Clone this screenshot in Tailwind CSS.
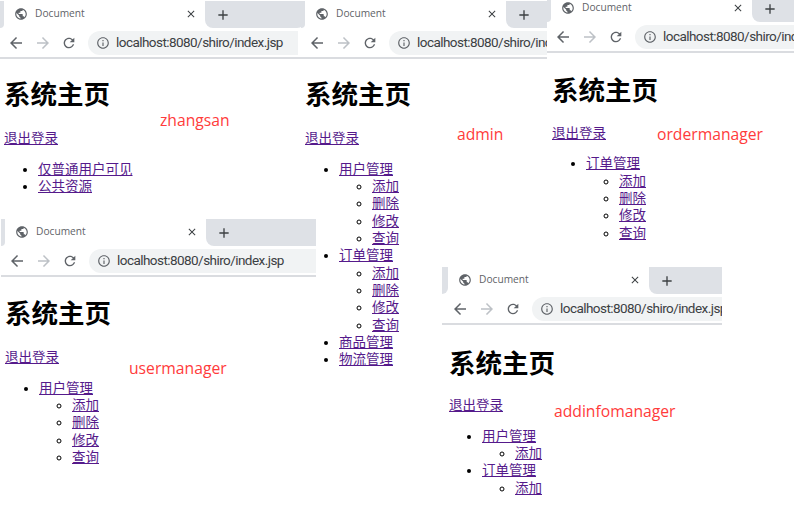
<!DOCTYPE html>
<html lang="zh-CN">

<head>
    <meta charset="UTF-8">
    <meta name="viewport" content="width=device-width, initial-scale=1.0">
    <title>Document</title>
    <script src="https://cdn.jsdelivr.net/npm/@tailwindcss/browser@4"></script>
</head>

<body class="bg-white">
    <svg class="hidden">
        <symbol id="globe" viewBox="0 0 24 24"><path d="M12 2C6.48 2 2 6.48 2 12s4.48 10 10 10 10-4.48 10-10S17.52 2 12 2zm-1 17.93c-3.95-.49-7-3.85-7-7.93 0-.62.08-1.21.21-1.79L9 15v1c0 1.1.9 2 2 2v1.93zm6.9-2.54c-.26-.81-1-1.39-1.9-1.39h-1v-3c0-.55-.45-1-1-1H8v-2h2c.55 0 1-.45 1-1V7h2c1.1 0 2-.9 2-2v-.41c2.93 1.19 5 4.06 5 7.41 0 2.08-.8 3.97-2.1 5.39z"/></symbol>
        <symbol id="close" viewBox="0 0 24 24"><path d="M19 6.41L17.59 5 12 10.59 6.41 5 5 6.41 10.59 12 5 17.59 6.41 19 12 13.41 17.59 19 19 17.59 13.41 12z"/></symbol>
        <symbol id="plus" viewBox="0 0 24 24"><path d="M19 13h-6v6h-2v-6H5v-2h6V5h2v6h6v2z"/></symbol>
        <symbol id="back" viewBox="0 0 24 24"><path d="M20 11H7.83l5.59-5.59L12 4l-8 8 8 8 1.41-1.41L7.83 13H20v-2z"/></symbol>
        <symbol id="forward" viewBox="0 0 24 24"><path d="M12 4l-1.41 1.41L16.17 11H4v2h12.17l-5.58 5.59L12 20l8-8z"/></symbol>
        <symbol id="reload" viewBox="0 0 24 24"><path d="M17.65 6.35C16.2 4.9 14.21 4 12 4c-4.42 0-7.99 3.58-7.99 8s3.57 8 7.99 8c3.73 0 6.84-2.55 7.73-6h-2.08c-.82 2.33-3.04 4-5.65 4-3.31 0-6-2.69-6-6s2.69-6 6-6c1.66 0 3.14.69 4.22 1.78L13 11h7V4l-2.35 2.35z"/></symbol>
        <symbol id="info" viewBox="0 0 24 24"><path d="M11 7h2v2h-2zm0 4h2v6h-2zm1-9C6.48 2 2 6.48 2 12s4.48 10 10 10 10-4.48 10-10S17.52 2 12 2zm0 18c-4.41 0-8-3.59-8-8s3.59-8 8-8 8 3.59 8 8-3.59 8-8 8z"/></symbol>
    </svg>

    <div class="relative w-[794px] h-[520px] overflow-hidden font-['Liberation_Sans','Noto_Sans_CJK_SC',sans-serif]">

        <!-- zhangsan -->
        <section class="absolute left-0 top-0 w-[305px] h-[215px] overflow-hidden bg-white">
            <div class="flex h-[27px] mt-px">
                <div class="w-1 bg-[#dee1e6] rounded-br-lg"></div>
                <div class="w-[201px] flex items-center pl-[10px] pb-px bg-white rounded-t-lg">
                    <svg class="w-[14px] h-[14px] fill-[#5f6368] shrink-0"><use href="#globe" /></svg>
                    <span class="ml-[7px] text-[10.2px] text-[#5f6368] font-['Open_Sans',sans-serif]">Document</span>
                    <svg class="w-3 h-3 ml-auto mr-2 fill-[#3c4043]"><use href="#close" /></svg>
                </div>
                <div class="flex-1 flex items-center pl-[10px] bg-[#dee1e6] rounded-bl-lg rounded-br-lg">
                    <svg class="w-4 h-4 fill-[#3c4043]"><use href="#plus" /></svg>
                </div>
            </div>
            <div class="flex items-center h-[29px] border-b-2 border-[#dadce0] box-content">
                <svg class="w-[18px] h-[18px] shrink-0 ml-[7px] fill-[#5f6368]"><use href="#back" /></svg>
                <svg class="w-[18px] h-[18px] shrink-0 ml-[9px] fill-[#bdc1c6]"><use href="#forward" /></svg>
                <svg class="w-4 h-4 shrink-0 ml-[9px] fill-[#5f6368]"><use href="#reload" /></svg>
                <div class="flex items-center w-[210px] h-6 ml-[11px] pl-2 rounded-l-xl bg-[#f1f3f4] shrink-0">
                    <svg class="w-[14px] h-[14px] shrink-0 fill-[#5f6368]"><use href="#info" /></svg>
                    <span class="ml-[6px] text-[13.5px] tracking-[-0.55px] text-[#3c4043] whitespace-nowrap font-['Roboto',sans-serif]">localhost:8080/shiro/index.jsp</span>
                </div>
            </div>
            <div class="pl-[4px] text-[13.5px] leading-[17.33px] text-black">
                <h1 class="mt-[20px] text-[26.5px] leading-[32px] font-bold">系统主页</h1>
                <a href="#" class="block mt-[19px] underline text-[#551a8b]">退出登录</a>
                <ul class="mt-[13.5px] pl-[34px] list-disc">
                    <li><a href="#" class="underline text-[#551a8b]">仅普通用户可见</a></li>
                    <li><a href="#" class="underline text-[#551a8b]">公共资源</a></li>
                </ul>
            </div>
        </section>

        <!-- admin -->
        <section class="absolute left-[301px] top-0 w-[246px] h-[400px] overflow-hidden bg-white">
            <div class="flex h-[27px] mt-px">
                <div class="w-1 bg-[#dee1e6] rounded-br-lg"></div>
                <div class="w-[201px] flex items-center pl-[10px] pb-px bg-white rounded-t-lg">
                    <svg class="w-[14px] h-[14px] fill-[#5f6368] shrink-0"><use href="#globe" /></svg>
                    <span class="ml-[7px] text-[10.2px] text-[#5f6368] font-['Open_Sans',sans-serif]">Document</span>
                    <svg class="w-3 h-3 ml-auto mr-2 fill-[#3c4043]"><use href="#close" /></svg>
                </div>
                <div class="flex-1 flex items-center pl-[10px] bg-[#dee1e6] rounded-bl-lg">
                    <svg class="w-4 h-4 fill-[#3c4043]"><use href="#plus" /></svg>
                </div>
            </div>
            <div class="flex items-center h-[29px] border-b-2 border-[#dadce0] box-content">
                <svg class="w-[18px] h-[18px] shrink-0 ml-[7px] fill-[#5f6368]"><use href="#back" /></svg>
                <svg class="w-[18px] h-[18px] shrink-0 ml-[9px] fill-[#bdc1c6]"><use href="#forward" /></svg>
                <svg class="w-4 h-4 shrink-0 ml-[9px] fill-[#5f6368]"><use href="#reload" /></svg>
                <div class="flex items-center w-[210px] h-6 ml-[11px] pl-2 rounded-l-xl bg-[#f1f3f4] shrink-0">
                    <svg class="w-[14px] h-[14px] shrink-0 fill-[#5f6368]"><use href="#info" /></svg>
                    <span class="ml-[6px] text-[13.5px] tracking-[-0.55px] text-[#3c4043] whitespace-nowrap font-['Roboto',sans-serif]">localhost:8080/shiro/index.jsp</span>
                </div>
            </div>
            <div class="pl-[4px] text-[13.5px] leading-[17.33px] text-black">
                <h1 class="mt-[20px] text-[26.5px] leading-[32px] font-bold">系统主页</h1>
                <a href="#" class="block mt-[19px] underline text-[#551a8b]">退出登录</a>
                <ul class="mt-[13.5px] pl-[34px] list-disc">
                    <li><a href="#" class="underline text-[#551a8b]">用户管理</a>
                        <ul class="pl-[33px] list-[circle]">
                            <li><a href="#" class="underline text-[#551a8b]">添加</a></li>
                            <li><a href="#" class="underline text-[#551a8b]">删除</a></li>
                            <li><a href="#" class="underline text-[#551a8b]">修改</a></li>
                            <li><a href="#" class="underline text-[#551a8b]">查询</a></li>
                        </ul>
                    </li>
                    <li><a href="#" class="underline text-[#551a8b]">订单管理</a>
                        <ul class="pl-[33px] list-[circle]">
                            <li><a href="#" class="underline text-[#551a8b]">添加</a></li>
                            <li><a href="#" class="underline text-[#551a8b]">删除</a></li>
                            <li><a href="#" class="underline text-[#551a8b]">修改</a></li>
                            <li><a href="#" class="underline text-[#551a8b]">查询</a></li>
                        </ul>
                    </li>
                    <li><a href="#" class="underline text-[#551a8b]">商品管理</a></li>
                    <li><a href="#" class="underline text-[#551a8b]">物流管理</a></li>
                </ul>
            </div>
        </section>

        <!-- ordermanager -->
        <section class="absolute left-[547px] top-[-6px] w-[247px] h-[260px] overflow-hidden bg-white">
            <div class="flex h-[27px] mt-px">
                <div class="w-1 bg-[#dee1e6] rounded-br-lg"></div>
                <div class="w-[201px] flex items-center pl-[10px] pb-px bg-white rounded-t-lg">
                    <svg class="w-[14px] h-[14px] fill-[#5f6368] shrink-0"><use href="#globe" /></svg>
                    <span class="ml-[7px] text-[10.2px] text-[#5f6368] font-['Open_Sans',sans-serif]">Document</span>
                    <svg class="w-3 h-3 ml-auto mr-2 fill-[#3c4043]"><use href="#close" /></svg>
                </div>
                <div class="flex-1 flex items-center pl-[10px] bg-[#dee1e6] rounded-bl-lg">
                    <svg class="w-4 h-4 fill-[#3c4043]"><use href="#plus" /></svg>
                </div>
            </div>
            <div class="flex items-center h-[29px] border-b-2 border-[#dadce0] box-content">
                <svg class="w-[18px] h-[18px] shrink-0 ml-[7px] fill-[#5f6368]"><use href="#back" /></svg>
                <svg class="w-[18px] h-[18px] shrink-0 ml-[9px] fill-[#bdc1c6]"><use href="#forward" /></svg>
                <svg class="w-4 h-4 shrink-0 ml-[9px] fill-[#5f6368]"><use href="#reload" /></svg>
                <div class="flex items-center w-[210px] h-6 ml-[11px] pl-2 rounded-l-xl bg-[#f1f3f4] shrink-0">
                    <svg class="w-[14px] h-[14px] shrink-0 fill-[#5f6368]"><use href="#info" /></svg>
                    <span class="ml-[6px] text-[13.5px] tracking-[-0.55px] text-[#3c4043] whitespace-nowrap font-['Roboto',sans-serif]">localhost:8080/shiro/index.jsp</span>
                </div>
            </div>
            <div class="pl-[5px] text-[13.5px] leading-[17.33px] text-black">
                <h1 class="mt-[22px] text-[26.5px] leading-[32px] font-bold">系统主页</h1>
                <a href="#" class="block mt-[18px] underline text-[#551a8b]">退出登录</a>
                <ul class="mt-[13px] pl-[34px] list-disc">
                    <li><a href="#" class="underline text-[#551a8b]">订单管理</a>
                        <ul class="pl-[33px] list-[circle]">
                            <li><a href="#" class="underline text-[#551a8b]">添加</a></li>
                            <li><a href="#" class="underline text-[#551a8b]">删除</a></li>
                            <li><a href="#" class="underline text-[#551a8b]">修改</a></li>
                            <li><a href="#" class="underline text-[#551a8b]">查询</a></li>
                        </ul>
                    </li>
                </ul>
            </div>
        </section>

        <!-- usermanager -->
        <section class="absolute left-px top-[218px] w-[315px] h-[260px] overflow-hidden">
            <div class="flex h-[27px] mt-px">
                <div class="w-1 bg-[#dee1e6] rounded-br-lg"></div>
                <div class="w-[201px] flex items-center pl-[10px] pb-px bg-white rounded-t-lg">
                    <svg class="w-[14px] h-[14px] fill-[#5f6368] shrink-0"><use href="#globe" /></svg>
                    <span class="ml-[7px] text-[10.2px] text-[#5f6368] font-['Open_Sans',sans-serif]">Document</span>
                    <svg class="w-3 h-3 ml-auto mr-2 fill-[#3c4043]"><use href="#close" /></svg>
                </div>
                <div class="flex-1 flex items-center pl-[10px] bg-[#dee1e6] rounded-bl-lg">
                    <svg class="w-4 h-4 fill-[#3c4043]"><use href="#plus" /></svg>
                </div>
            </div>
            <div class="flex items-center h-[29px] border-b-2 border-[#dadce0] box-content bg-white">
                <svg class="w-[18px] h-[18px] shrink-0 ml-[7px] fill-[#5f6368]"><use href="#back" /></svg>
                <svg class="w-[18px] h-[18px] shrink-0 ml-[9px] fill-[#bdc1c6]"><use href="#forward" /></svg>
                <svg class="w-4 h-4 shrink-0 ml-[9px] fill-[#5f6368]"><use href="#reload" /></svg>
                <div class="flex items-center w-[240px] h-6 ml-[11px] pl-2 rounded-l-xl bg-[#f1f3f4] shrink-0">
                    <svg class="w-[14px] h-[14px] shrink-0 fill-[#5f6368]"><use href="#info" /></svg>
                    <span class="ml-[6px] text-[13.5px] tracking-[-0.55px] text-[#3c4043] whitespace-nowrap font-['Roboto',sans-serif]">localhost:8080/shiro/index.jsp</span>
                </div>
            </div>
            <div class="pl-[4px] text-[13.5px] leading-[17.33px] text-black">
                <h1 class="mt-[21px] text-[26.5px] leading-[32px] font-bold">系统主页</h1>
                <a href="#" class="block mt-[19px] underline text-[#551a8b]">退出登录</a>
                <ul class="mt-[13.5px] pl-[34px] list-disc">
                    <li><a href="#" class="underline text-[#551a8b]">用户管理</a>
                        <ul class="pl-[33px] list-[circle]">
                            <li><a href="#" class="underline text-[#551a8b]">添加</a></li>
                            <li><a href="#" class="underline text-[#551a8b]">删除</a></li>
                            <li><a href="#" class="underline text-[#551a8b]">修改</a></li>
                            <li><a href="#" class="underline text-[#551a8b]">查询</a></li>
                        </ul>
                    </li>
                </ul>
            </div>
        </section>

        <!-- addinfomanager -->
        <section class="absolute left-[442px] top-[266px] w-[280px] h-[240px] overflow-hidden bg-white">
            <div class="flex h-[27px] mt-px">
                <div class="w-[6px] bg-[#dee1e6] rounded-br-lg"></div>
                <div class="w-[201px] flex items-center pl-[10px] pb-px bg-white rounded-t-lg">
                    <svg class="w-[14px] h-[14px] fill-[#5f6368] shrink-0"><use href="#globe" /></svg>
                    <span class="ml-[7px] text-[10.2px] text-[#5f6368] font-['Open_Sans',sans-serif]">Document</span>
                    <svg class="w-3 h-3 ml-auto mr-2 fill-[#3c4043]"><use href="#close" /></svg>
                </div>
                <div class="flex-1 flex items-center pl-[10px] bg-[#dee1e6] rounded-bl-lg">
                    <svg class="w-4 h-4 fill-[#3c4043]"><use href="#plus" /></svg>
                </div>
            </div>
            <div class="flex items-center h-[29px] border-b-2 border-[#dadce0] box-content pl-[2px]">
                <svg class="w-[18px] h-[18px] shrink-0 ml-[7px] fill-[#5f6368]"><use href="#back" /></svg>
                <svg class="w-[18px] h-[18px] shrink-0 ml-[9px] fill-[#bdc1c6]"><use href="#forward" /></svg>
                <svg class="w-4 h-4 shrink-0 ml-[9px] fill-[#5f6368]"><use href="#reload" /></svg>
                <div class="flex items-center w-[210px] h-6 ml-[11px] pl-2 rounded-l-xl bg-[#f1f3f4] shrink-0">
                    <svg class="w-[14px] h-[14px] shrink-0 fill-[#5f6368]"><use href="#info" /></svg>
                    <span class="ml-[6px] text-[13.5px] tracking-[-0.55px] text-[#3c4043] whitespace-nowrap font-['Roboto',sans-serif]">localhost:8080/shiro/index.jsp</span>
                </div>
            </div>
            <div class="pl-[7px] text-[13.5px] leading-[17.33px] text-black">
                <h1 class="mt-[23px] text-[26.5px] leading-[32px] font-bold">系统主页</h1>
                <a href="#" class="block mt-[17px] underline text-[#551a8b]">退出登录</a>
                <ul class="mt-[13.5px] pl-[33px] list-disc">
                    <li><a href="#" class="underline text-[#551a8b]">用户管理</a>
                        <ul class="pl-[33px] list-[circle]">
                            <li><a href="#" class="underline text-[#551a8b]">添加</a></li>
                        </ul>
                    </li>
                    <li><a href="#" class="underline text-[#551a8b]">订单管理</a>
                        <ul class="pl-[33px] list-[circle]">
                            <li><a href="#" class="underline text-[#551a8b]">添加</a></li>
                        </ul>
                    </li>
                </ul>
            </div>
        </section>

        <!-- red captions pasted over the screenshots -->
        <span class="absolute left-[160px] top-[109px] text-[15.7px] leading-[22px] text-[#ff3b3b] font-['Open_Sans',sans-serif]">zhangsan</span>
        <span class="absolute left-[457px] top-[123px] text-[15.7px] leading-[22px] text-[#ff3b3b] font-['Open_Sans',sans-serif]">admin</span>
        <span class="absolute left-[657px] top-[123px] text-[15.7px] leading-[22px] text-[#ff3b3b] font-['Open_Sans',sans-serif]">ordermanager</span>
        <span class="absolute left-[129px] top-[357px] text-[15.7px] leading-[22px] text-[#ff3b3b] font-['Open_Sans',sans-serif]">usermanager</span>
        <span class="absolute left-[554px] top-[400px] text-[15.7px] leading-[22px] text-[#ff3b3b] font-['Open_Sans',sans-serif]">addinfomanager</span>
    </div>
</body>

</html>
